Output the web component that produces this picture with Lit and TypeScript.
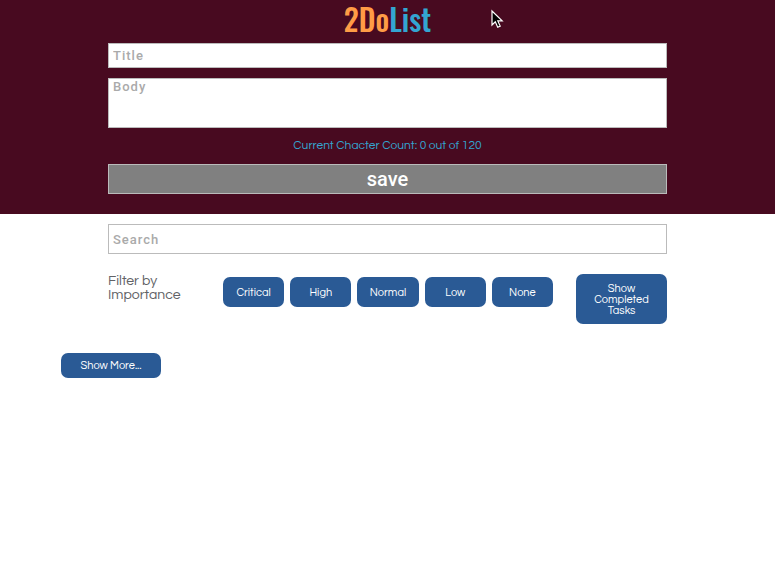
import { LitElement, html, css } from "lit";
import { customElement, state } from "lit/decorators.js";

const LEVELS = ["Critical", "High", "Normal", "Low", "None"];

@customElement("app-root")
export class AppRoot extends LitElement {
  @state() private body = "";

  static styles = css`
    :host {
      display: block;
      min-height: 100vh;
      background: #fff;
      font-family: Questrial, Inter, "Liberation Sans", sans-serif;
    }
    * {
      box-sizing: border-box;
    }
    button,
    input,
    textarea {
      font: inherit;
      margin: 0;
    }
    .top {
      position: relative;
      display: flex;
      flex-direction: column;
      padding: 0 108px 20px;
      background: #480a20;
    }
    .logo {
      margin: 0 0 5px;
      text-align: center;
      font: 500 30px/38px Oswald, "Liberation Sans Narrow", sans-serif;
      color: #ff9c46;
    }
    .logo-end {
      color: #33a5d1;
    }
    .field {
      display: block;
      width: 100%;
      border: 1px solid #bbb;
      border-radius: 0;
      background: #fff;
      color: #333;
      font: 500 13px/16px Roboto, sans-serif;
      letter-spacing: 1px;
      outline: none;
    }
    .field::placeholder {
      color: #aaa;
      opacity: 1;
    }
    .title {
      height: 25px;
      padding: 0 4px;
      margin-bottom: 10px;
    }
    .body {
      height: 50px;
      padding: 0 4px;
      resize: none;
    }
    .count {
      margin: 9px 0;
      text-align: center;
      font-size: 12px;
      line-height: 18px;
      color: #33a5d1;
    }
    .save {
      height: 30px;
      padding: 0;
      border: 1px solid #bbb;
      background: #808080;
      color: #fff;
      font: 500 20px/28px Roboto, sans-serif;
    }
    .cursor {
      position: absolute;
      left: 490px;
      top: 9px;
    }
    .tools {
      padding: 10px 108px 0;
    }
    .search {
      height: 30px;
      padding: 0 4px;
    }
    .filters {
      display: grid;
      grid-template-columns: 92px minmax(0, 1fr) 91px;
      column-gap: 23px;
      margin-top: 20px;
    }
    .label {
      margin: 0;
      font-size: 14px;
      line-height: 14px;
      font-weight: 400;
      color: #616266;
    }
    .levels {
      display: flex;
      gap: 6px;
      padding-top: 3px;
    }
    .btn {
      border: 0;
      border-radius: 7px;
      padding: 0;
      background: #2a5a95;
      color: #fff;
      font-size: 11px;
      font-weight: 600;
      line-height: 11px;
    }
    .level {
      flex: 1;
      height: 30px;
    }
    .completed {
      height: 50px;
      padding: 0 16px;
    }
    .more {
      display: block;
      width: 100px;
      height: 25px;
      margin: 29px 0 0 61px;
    }
  `;

  render() {
    return html`
      <header class="top">
        <h1 class="logo">2Do<span class="logo-end">List</span></h1>
        <input class="field title" type="text" placeholder="Title" aria-label="Title" />
        <textarea
          class="field body"
          placeholder="Body"
          aria-label="Body"
          maxlength="120"
          @input=${(e: Event) => (this.body = (e.target as HTMLTextAreaElement).value)}
        ></textarea>
        <p class="count">Current Chacter Count: ${this.body.length} out of 120</p>
        <button class="save" type="button">save</button>
        <svg class="cursor" width="14" height="20" viewBox="0 0 14 20" aria-hidden="true">
          <path d="M2 2v14l3.3-3.2 2.4 5.4 2.5-1.1-2.4-5.2h4.4z" fill="#000" stroke="#fff" stroke-width="1.2" />
        </svg>
      </header>
      <main>
        <section class="tools">
          <input class="field search" type="text" placeholder="Search" aria-label="Search" />
          <div class="filters">
            <h2 class="label">Filter by Importance</h2>
            <div class="levels">
              ${LEVELS.map((l) => html`<button class="btn level" type="button">${l}</button>`)}
            </div>
            <button class="btn completed" type="button">Show Completed Tasks</button>
          </div>
        </section>
        <button class="btn more" type="button">Show More...</button>
      </main>
    `;
  }
}
